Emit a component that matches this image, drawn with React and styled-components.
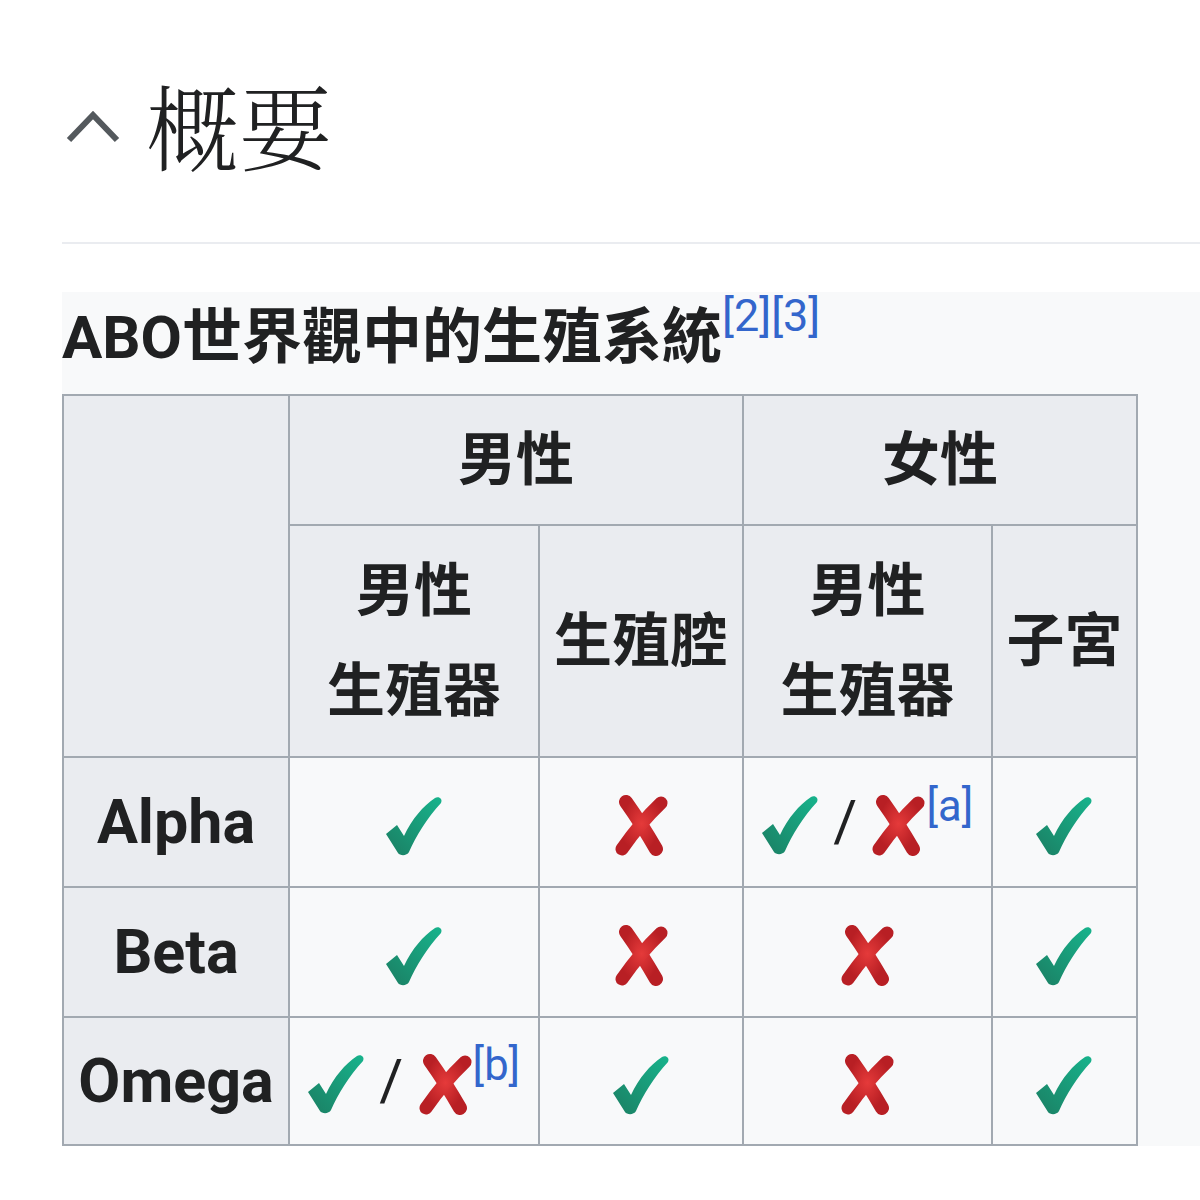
import React from 'react';
import styled, { createGlobalStyle } from 'styled-components';

const GlobalStyle = createGlobalStyle`
  body {
    margin: 0;
    background: #fff;
  }
`;

const Page = styled.div`
  width: 1200px;
  overflow: hidden;
  padding: 66px 0 0 62px;
  box-sizing: border-box;
  font-family: Roboto, "Noto Sans CJK TC", sans-serif;
  color: #202122;
`;

const SectionHeader = styled.div`
  display: flex;
  align-items: center;
  gap: 22px;
  height: 116px;
`;

const Heading = styled.h2`
  margin: 0;
  font-family: "Noto Serif CJK TC", "Noto Sans CJK TC", serif;
  font-size: 93px;
  font-weight: 300;
  line-height: 1;
  color: #202122;
`;

const Divider = styled.div`
  margin-top: 60px;
  height: 2px;
  background: #eaecf0;
`;

const Panel = styled.div`
  margin-top: 48px;
  background: #f8f9fa;
`;

const Table = styled.table`
  border-collapse: collapse;
  table-layout: fixed;
  width: 1076px;
`;

const Caption = styled.caption`
  text-align: left;
  font-size: 60px;
  font-weight: 700;
  line-height: 92px;
  padding-bottom: 10px;
  white-space: nowrap;
`;

const Row = styled.tr`
  height: ${p => p.$h}px;
`;

const HeadCell = styled.th`
  border: 2px solid #a2a9b1;
  background: #eaecf0;
  font-size: ${p => (p.$latin ? 61 : 58)}px;
  font-weight: 700;
  line-height: 100px;
  text-align: center;
  vertical-align: middle;
  padding: 0 6px;
  white-space: nowrap;
`;

const Cell = styled.td`
  border: 2px solid #a2a9b1;
  background: #f8f9fa;
  font-size: 58px;
  font-weight: 400;
  text-align: center;
  vertical-align: middle;
  padding: 0 6px;
  white-space: nowrap;
`;

const Ref = styled.sup`
  font-size: 75%;
  font-weight: 400;
  line-height: 0;
  color: #3366cc;
  vertical-align: ${p => p.$raise || 20}px;
`;

const IconBox = styled.svg`
  display: inline-block;
  vertical-align: middle;
`;

function Chevron() {
  return (
    <IconBox width="62" height="44" viewBox="0 0 62 44">
      <polyline points="7,38 31,13 55,38" fill="none" stroke="#54595d" strokeWidth="6" />
    </IconBox>
  );
}

function Check() {
  return (
    <IconBox width="57" height="60" viewBox="0 0 57 60">
      <defs>
        <linearGradient id="chk" x1="0" y1="1" x2="1" y2="0">
          <stop offset="0" stopColor="#1b7f63" />
          <stop offset="1" stopColor="#17b38c" />
        </linearGradient>
      </defs>
      <path
        d="M 0 38 L 11 29 L 18 40 C 26 23 37 10 49 2 C 53 0 57 3 55 7 C 41 22 30 40 23 56 C 21 60 14 60 12 57 Z"
        fill="url(#chk)"
      />
    </IconBox>
  );
}

function Cross() {
  return (
    <IconBox width="55" height="64" viewBox="0 0 55 64">
      <defs>
        <radialGradient id="crs" cx="0.5" cy="0.45" r="0.6">
          <stop offset="0" stopColor="#e53a3a" />
          <stop offset="1" stopColor="#b81f24" />
        </radialGradient>
      </defs>
      <g fill="none" stroke="url(#crs)" strokeLinecap="round">
        <path d="M 12 9 Q 27 30 42 56" strokeWidth="14" />
        <path d="M 47 10 Q 26 30 8 56" strokeWidth="13" />
      </g>
    </IconBox>
  );
}

function Either({ note }) {
  return (
    <>
      <Check /> / <Cross />
      <Ref>[{note}]</Ref>
    </>
  );
}

const rows = [
  { name: 'Alpha', cells: [<Check />, <Cross />, <Either note="a" />, <Check />] },
  { name: 'Beta', cells: [<Check />, <Cross />, <Cross />, <Check />] },
  { name: 'Omega', cells: [<Either note="b" />, <Check />, <Cross />, <Check />] },
];

export default function App() {
  return (
    <>
      <GlobalStyle />
      <Page>
        <SectionHeader>
          <Chevron />
          <Heading>概要</Heading>
        </SectionHeader>
        <Divider />
        <Panel>
          <Table>
            <Caption>
              ABO世界觀中的生殖系統<Ref $raise={27}>[2][3]</Ref>
            </Caption>
            <colgroup>
              <col style={{ width: 226 }} />
              <col style={{ width: 250 }} />
              <col style={{ width: 204 }} />
              <col style={{ width: 249 }} />
              <col style={{ width: 145 }} />
            </colgroup>
            <tbody>
              <Row $h={130}>
                <HeadCell rowSpan={2} />
                <HeadCell colSpan={2}>男性</HeadCell>
                <HeadCell colSpan={2}>女性</HeadCell>
              </Row>
              <Row $h={232}>
                <HeadCell>男性<br />生殖器</HeadCell>
                <HeadCell>生殖腔</HeadCell>
                <HeadCell>男性<br />生殖器</HeadCell>
                <HeadCell>子宮</HeadCell>
              </Row>
              {rows.map((r, i) => (
                <Row key={r.name} $h={i === 2 ? 128 : 130}>
                  <HeadCell $latin>{r.name}</HeadCell>
                  {r.cells.map((c, j) => (
                    <Cell key={j}>{c}</Cell>
                  ))}
                </Row>
              ))}
            </tbody>
          </Table>
        </Panel>
      </Page>
    </>
  );
}
